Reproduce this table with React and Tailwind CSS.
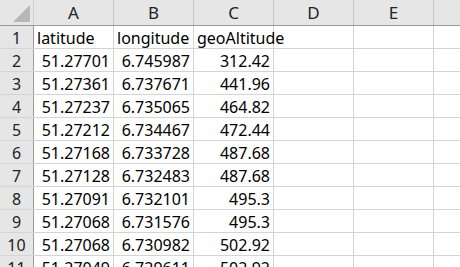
const cols = ['A', 'B', 'C', 'D', 'E'];

const rows = [
  ['latitude', 'longitude', 'geoAltitude'],
  ['51.27701', '6.745987', '312.42'],
  ['51.27361', '6.737671', '441.96'],
  ['51.27237', '6.735065', '464.82'],
  ['51.27212', '6.734467', '472.44'],
  ['51.27168', '6.733728', '487.68'],
  ['51.27128', '6.732483', '487.68'],
  ['51.27091', '6.732101', '495.3'],
  ['51.27068', '6.731576', '495.3'],
  ['51.27068', '6.730982', '502.92'],
  ['51.27049', '6.729611', '502.92'],
];

const font = { fontFamily: '"Noto Sans", "Noto Sans CJK SC", sans-serif' };

export default function App() {
  return (
    <div className="w-[460px] h-[267px] overflow-hidden bg-white text-[16px] text-black" style={font}>
      {/* column headers */}
      <div className="flex h-[26px] bg-[#e6e6e6] border-b border-[#9b9b9b]">
        <div className="relative w-[34px] shrink-0 border-r border-[#d0d0d0]">
          <div className="absolute right-[3px] bottom-[3px] w-0 h-0 border-l-[17px] border-l-transparent border-b-[17px] border-b-[#b7b7b7]" />
        </div>
        {cols.map((c) => (
          <div key={c} className="w-[80px] shrink-0 flex items-center justify-center pt-[1px] text-[17px] text-[#222] border-r border-[#c6c6c6]">
            {c}
          </div>
        ))}
        <div className="flex-1" />
      </div>
      {rows.map((r, i) => (
        <div key={i} className="flex h-[23px] border-b border-[#d4d4d4]">
          <div className="w-[34px] shrink-0 flex items-center justify-center pt-[1px] bg-[#e6e6e6] border-r border-[#9b9b9b] text-[#222]">
            {i + 1}
          </div>
          {cols.map((c, j) => {
            const v = r[j] ?? '';
            const num = i > 0;
            return (
              <div
                key={c}
                className={`w-[80px] shrink-0 flex items-center pt-[1px] px-[3px] border-r border-[#d4d4d4] whitespace-nowrap ${num ? 'justify-end' : 'justify-start'}`}
              >
                {v}
              </div>
            );
          })}
          <div className="flex-1" />
        </div>
      ))}
    </div>
  );
}
